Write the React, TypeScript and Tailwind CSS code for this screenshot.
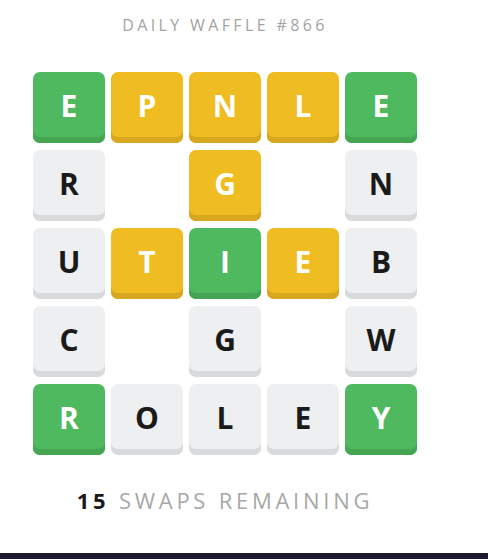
import React from "react";

type C = "g" | "y" | "w" | "n";
const rows: [string, C][][] = [
  [["E", "g"], ["P", "y"], ["N", "y"], ["L", "y"], ["E", "g"]],
  [["R", "w"], ["", "n"], ["G", "y"], ["", "n"], ["N", "w"]],
  [["U", "w"], ["T", "y"], ["I", "g"], ["E", "y"], ["B", "w"]],
  [["C", "w"], ["", "n"], ["G", "w"], ["", "n"], ["W", "w"]],
  [["R", "g"], ["O", "w"], ["L", "w"], ["E", "w"], ["Y", "g"]],
];

const cls: Record<C, string> = {
  g: "bg-[#4fb95f] text-white shadow-[inset_0_-6px_0_#45a553]",
  y: "bg-[#efbc21] text-white shadow-[inset_0_-6px_0_#d6a71f]",
  w: "bg-[#eeeff1] text-[#1a1a1a] shadow-[inset_0_-6px_0_#d9dadc]",
  n: "",
};

export default function App() {
  return (
    <div className="flex h-[559px] w-[488px] flex-col bg-white" style={{ fontFamily: "'Open Sans', 'Noto Sans', sans-serif" }}>
      <div className="w-[450px] pt-[14px] text-center text-[16px] leading-[22px] tracking-[0.21em] text-[#a3a3a3]">
        DAILY WAFFLE #866
      </div>
      <div className="ml-[33px] mt-[36px] grid w-[384px] grid-cols-[repeat(5,72px)] gap-x-[6px] gap-y-[7px]">
        {rows.flat().map(([l, c], i) => (
          <div
            key={i}
            className={`flex h-[71px] w-[72px] items-center justify-center rounded-[7px] pb-[4px] text-[30px] font-bold ${cls[c]}`}
          >
            {l}
          </div>
        ))}
      </div>
      <div className="mt-[30px] w-[450px] text-center text-[22px] leading-[30px] tracking-[0.17em]">
        <span className="font-bold text-[#1a1a1a]">15</span>{" "}
        <span className="text-[#a8a8a8]">SWAPS REMAINING</span>
      </div>
      <div className="flex-1" />
      <div className="h-[6px] w-full bg-[#1d1b2b]" />
    </div>
  );
}
